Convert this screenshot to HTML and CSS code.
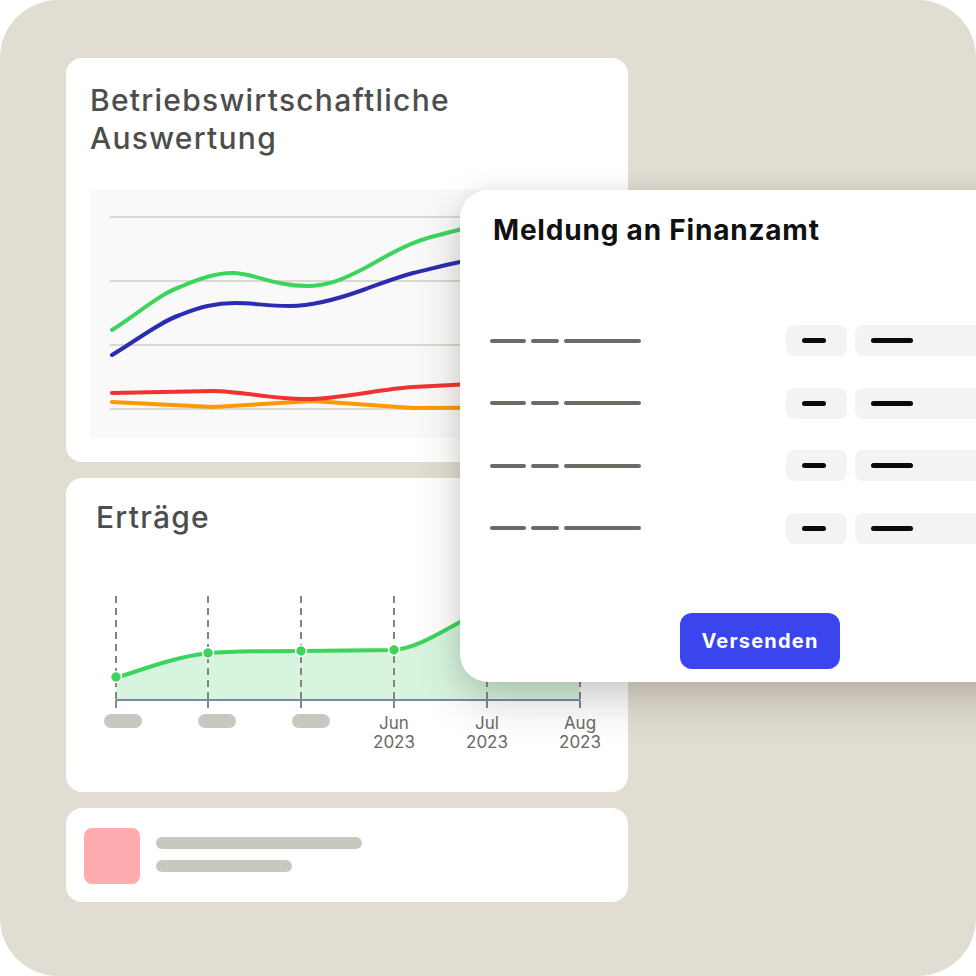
FILE: index.html
```html
<!DOCTYPE html>
<html lang="de">
<head>
<meta charset="utf-8">
<title>Meldung an Finanzamt</title>
<link rel="stylesheet" href="styles.css">
</head>
<body>
<div class="frame">
  <div class="column">
    <section class="card card-bwa">
      <h2 class="card-title">Betriebswirtschaftliche<br>Auswertung</h2>
      <svg class="bwa-chart" width="514" height="248" viewBox="0 0 514 248">
        <rect x="0" y="0" width="514" height="248" fill="#F9F9F9"/>
        <g stroke="#DAD8D2" stroke-width="2">
          <line x1="20" y1="27" x2="514" y2="27"/>
          <line x1="20" y1="91" x2="514" y2="91"/>
          <line x1="20" y1="155" x2="514" y2="155"/>
          <line x1="20" y1="219" x2="514" y2="219"/>
        </g>
        <g fill="none" stroke-width="4" stroke-linecap="round" stroke-linejoin="round">
          <path stroke="#FF9900" d="M22,212 L123,217 L223,211 L323,218 L494,217"/>
          <path stroke="#F03232" d="M22,203 L123,201 C150,201 180,209 217,209 C250,209 290,199 323,197 L494,188"/>
          <path stroke="#2A2DB0" d="M22,165 C50,148 70,132 90,125 C110,117 125,113 145,113 C165,113 175,116 200,116 C220,116 245,110 273,100 C295,92 305,88 323,83 C340,79 355,75 370,72 L494,50"/>
          <path stroke="#3DD45C" d="M22,140 C50,122 70,104 90,97 C110,88 130,82 145,83 C165,84 185,96 217,96 C240,96 255,88 275,78 C300,64 320,52 345,46 C365,41 380,36 420,28 L494,18"/>
        </g>
      </svg>
    </section>

    <section class="card card-ertraege">
      <h2 class="card-title">Erträge</h2>
      <svg class="ertraege-chart" width="562" height="200" viewBox="0 0 562 200">
        <path fill="#D7F5DE" d="M50,118 C80,108 110,97 142,93 C170,91 200,91 235,91 L328,90 C350,88 370,75 394,62 C420,48 460,35 514,30 L514,140 L50,140 Z"/>
        <g stroke="#858580" stroke-width="2" stroke-dasharray="7 5">
          <line x1="50" y1="36" x2="50" y2="140"/>
          <line x1="142" y1="36" x2="142" y2="140"/>
          <line x1="235" y1="36" x2="235" y2="140"/>
          <line x1="328" y1="36" x2="328" y2="140"/>
          <line x1="421" y1="36" x2="421" y2="140"/>
          <line x1="514" y1="36" x2="514" y2="140"/>
        </g>
        <g stroke="#7A88A6" stroke-width="2">
          <line x1="50" y1="140" x2="514" y2="140"/>
          <line x1="50" y1="140" x2="50" y2="148"/>
          <line x1="142" y1="140" x2="142" y2="148"/>
          <line x1="235" y1="140" x2="235" y2="148"/>
          <line x1="328" y1="140" x2="328" y2="148"/>
          <line x1="421" y1="140" x2="421" y2="148"/>
          <line x1="514" y1="140" x2="514" y2="148"/>
        </g>
        <path fill="none" stroke="#3DD45C" stroke-width="4" stroke-linecap="round" d="M50,118 C80,108 110,97 142,93 C170,91 200,91 235,91 L328,90 C350,88 370,75 394,62 C420,48 460,35 514,30"/>
        <g fill="#3DD45C" stroke="#FFFFFF" stroke-width="1.5">
          <circle cx="50" cy="117" r="5.5"/>
          <circle cx="142" cy="93" r="5.5"/>
          <circle cx="235" cy="91" r="5.5"/>
          <circle cx="328" cy="90" r="5.5"/>
        </g>
        <g fill="#C9C8C0">
          <rect x="38" y="154" width="38" height="14" rx="7"/>
          <rect x="132" y="154" width="38" height="14" rx="7"/>
          <rect x="226" y="154" width="38" height="14" rx="7"/>
        </g>
        <g class="axis-label" text-anchor="middle">
          <text x="328" y="169">Jun</text>
          <text x="328" y="188">2023</text>
          <text x="421" y="169">Jul</text>
          <text x="421" y="188">2023</text>
          <text x="514" y="169">Aug</text>
          <text x="514" y="188">2023</text>
        </g>
      </svg>
    </section>

    <section class="card card-item">
      <div class="item-thumb"></div>
      <div class="item-lines">
        <div class="item-line item-line-long"></div>
        <div class="item-line item-line-short"></div>
      </div>
    </section>
  </div>

  <div class="modal">
    <h2 class="modal-title">Meldung an Finanzamt</h2>
    <div class="rows">
      <div class="row">
        <div class="label"><span class="d d1"></span><span class="d d2"></span><span class="d d3"></span></div>
        <div class="field field-s"><span class="val val-s"></span></div>
        <div class="field field-l"><span class="val val-l"></span></div>
      </div>
      <div class="row">
        <div class="label"><span class="d d1"></span><span class="d d2"></span><span class="d d3"></span></div>
        <div class="field field-s"><span class="val val-s"></span></div>
        <div class="field field-l"><span class="val val-l"></span></div>
      </div>
      <div class="row">
        <div class="label"><span class="d d1"></span><span class="d d2"></span><span class="d d3"></span></div>
        <div class="field field-s"><span class="val val-s"></span></div>
        <div class="field field-l"><span class="val val-l"></span></div>
      </div>
      <div class="row">
        <div class="label"><span class="d d1"></span><span class="d d2"></span><span class="d d3"></span></div>
        <div class="field field-s"><span class="val val-s"></span></div>
        <div class="field field-l"><span class="val val-l"></span></div>
      </div>
    </div>
    <div class="actions">
      <button class="btn">Versenden</button>
    </div>
  </div>
</div>
</body>
</html>
```

FILE: styles.css
```css
* { box-sizing: border-box; }

html, body {
  margin: 0;
  padding: 0;
  background: #FFFFFF;
}

body {
  font-family: Inter, "Liberation Sans", sans-serif;
}

.frame {
  position: relative;
  width: 976px;
  height: 976px;
  background: #E2DDD2;
  border-radius: 58px;
  overflow: hidden;
  padding: 58px 0 0 66px;
}

.column {
  width: 562px;
  display: flex;
  flex-direction: column;
  gap: 16px;
}

.card {
  background: #FFFFFF;
  border-radius: 16px;
}

.card-title {
  margin: 0;
  font-size: 30px;
  line-height: 38px;
  font-weight: 500;
  color: #4D4D4B;
  letter-spacing: 1.25px;
}

.card-bwa {
  padding: 23px 24px 24px 24px;
}

.bwa-chart {
  display: block;
  margin-top: 33px;
}

.card-ertraege {
  padding: 20px 0 32px 0;
}

.card-ertraege .card-title {
  padding-left: 30px;
}

.ertraege-chart {
  display: block;
  margin-top: 24px;
}

.axis-label {
  font-family: Inter, "Liberation Sans", sans-serif;
  font-size: 17px;
  fill: #6A6A66;
}

.card-item {
  display: flex;
  align-items: flex-start;
  gap: 16px;
  padding: 20px 18px 18px 18px;
}

.item-thumb {
  width: 56px;
  height: 56px;
  border-radius: 8px;
  background: #FFACB0;
}

.item-lines {
  display: flex;
  flex-direction: column;
  gap: 11px;
  padding-top: 9px;
}

.item-line {
  height: 12px;
  border-radius: 6px;
  background: #C9C8C0;
}

.item-line-long { width: 206px; }
.item-line-short { width: 136px; }

.modal {
  position: absolute;
  left: 460px;
  top: 190px;
  width: 600px;
  height: 492px;
  background: #FFFFFF;
  border-radius: 28px;
  box-shadow: 0 18px 44px rgba(40, 30, 20, 0.22), 0 0 18px rgba(0, 0, 0, 0.06);
  padding: 24px 0 0 0;
}

.modal-title {
  margin: 0 0 0 33px;
  font-size: 28px;
  line-height: 33px;
  font-weight: 700;
  color: #111111;
  letter-spacing: 0.8px;
}

.rows {
  margin-top: 78px;
  display: flex;
  flex-direction: column;
  gap: 31.5px;
}

.row {
  display: flex;
  align-items: center;
  height: 31px;
  padding-left: 30px;
}

.label {
  display: flex;
  gap: 5px;
  width: 296px;
}

.d {
  display: block;
  height: 4px;
  border-radius: 2px;
  background: #6B6B66;
}

.d1 { width: 36px; }
.d2 { width: 28px; }
.d3 { width: 77px; }

.field {
  height: 31px;
  border-radius: 8px;
  background: #F3F3F1;
  display: flex;
  align-items: center;
  padding-left: 16px;
}

.field-s { width: 61px; }
.field-l { width: 200px; margin-left: 8px; }

.val {
  display: block;
  height: 5px;
  border-radius: 3px;
  background: #0A0A0A;
}

.val-s { width: 24px; }
.val-l { width: 42px; }

.actions {
  margin-top: 69px;
  display: flex;
  justify-content: center;
}

.btn {
  width: 160px;
  height: 56px;
  border: none;
  border-radius: 12px;
  background: #3B45EE;
  color: #FFFFFF;
  font-family: Inter, "Liberation Sans", sans-serif;
  font-size: 20px;
  font-weight: 700;
  letter-spacing: 1.2px;
  padding: 0;
}
```
